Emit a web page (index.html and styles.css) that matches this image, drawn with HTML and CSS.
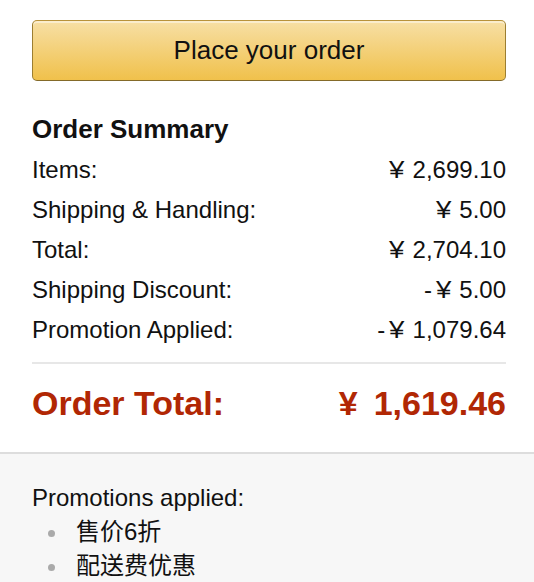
FILE: index.html
```
<!DOCTYPE html>
<html lang="en">
<head>
<meta charset="utf-8">
<title>Order Summary</title>
<link rel="stylesheet" href="styles.css">
</head>
<body>
<div class="summary">
  <button class="place-btn" type="button">Place your order</button>
  <h3 class="heading">Order Summary</h3>
  <div class="rows">
    <div class="row"><span>Items:</span><span><span class="yen">¥</span>2,699.10</span></div>
    <div class="row"><span>Shipping &amp; Handling:</span><span><span class="yen">¥</span>5.00</span></div>
    <div class="row"><span>Total:</span><span><span class="yen">¥</span>2,704.10</span></div>
    <div class="row"><span>Shipping Discount:</span><span><span class="minus">-</span><span class="yen">¥</span>5.00</span></div>
    <div class="row"><span>Promotion Applied:</span><span><span class="minus">-</span><span class="yen">¥</span>1,079.64</span></div>
  </div>
  <div class="divider"></div>
  <div class="row total"><span>Order Total:</span><span><span class="yen">¥</span>1,619.46</span></div>
</div>
<div class="promos">
  <div class="promo-title">Promotions applied:</div>
  <ul class="promo-list">
    <li>售价6折</li>
    <li>配送费优惠</li>
  </ul>
</div>
</body>
</html>
```
FILE: styles.css
```
html, body {
  margin: 0;
  padding: 0;
  background: #fff;
}
body {
  font-family: "Liberation Sans", Arial, Helvetica, "Noto Sans CJK SC", sans-serif;
  color: #111;
}
.summary {
  padding: 20px 28px 29px 32px;
  border-bottom: 2px solid #dddddd;
}
.place-btn {
  display: block;
  width: 100%;
  height: 61px;
  box-sizing: border-box;
  margin: 0;
  padding: 0;
  border: 1px solid;
  border-color: #b8923a #9c7e31 #846a29;
  border-radius: 5px;
  background: linear-gradient(to bottom, #f7dfa5, #f0c14b);
  box-shadow: inset 0 2px 0 rgba(255, 255, 255, 0.45);
  font-family: "Liberation Sans", Arial, Helvetica, sans-serif;
  font-size: 26px;
  color: #111;
  text-align: center;
}
.heading {
  margin: 33px 0 6px 0;
  font-size: 26px;
  line-height: 30px;
  font-weight: bold;
}
.row {
  display: flex;
  justify-content: space-between;
  font-size: 24px;
  line-height: 40px;
}
.yen {
  display: inline-block;
  margin-right: 9px;
  transform: scaleX(1.15);
}
.minus {
  margin-right: 5px;
}
.divider {
  height: 2px;
  background: #e7e7e7;
  margin: 12px 0 19px 0;
}
.row.total {
  font-size: 34px;
  line-height: 40px;
  font-weight: bold;
  color: #b12704;
}
.row.total .yen {
  margin-right: 16px;
  transform: none;
}
.promos {
  background: #f7f7f7;
  padding: 27px 32px 20px 32px;
  font-size: 24px;
  line-height: 34px;
}
.promo-list {
  list-style: none;
  margin: 0;
  padding: 0;
  font-family: "Liberation Sans", Arial, "Noto Sans CJK SC", sans-serif;
}
.promo-list li {
  display: flex;
  align-items: center;
}
.promo-list li::before {
  content: "";
  width: 7px;
  height: 7px;
  border-radius: 50%;
  background: #aaaaaa;
  margin: 2px 21px 0 16px;
  flex-shrink: 0;
}
```
